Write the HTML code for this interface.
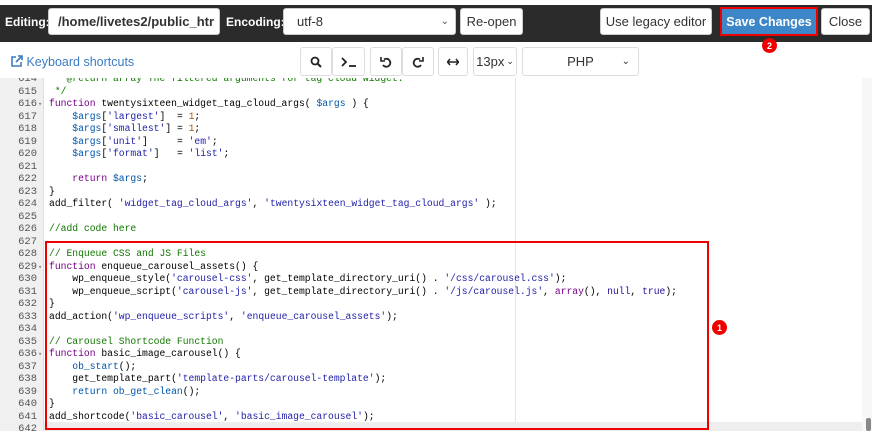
<!DOCTYPE html><html><head><style>
*{box-sizing:border-box;margin:0;padding:0}
body{width:872px;height:431px;overflow:hidden;background:#fff;font-family:"Liberation Sans",sans-serif;position:relative}
.a{position:absolute}
.hdr{left:0;top:5px;width:872px;height:37px;background:#2b2b2b}
.lbl{color:#fff;font-weight:bold;font-size:12px;top:15px}
.box{background:#fff;border:1px solid #ccc;border-radius:3px;font-size:13px;color:#333;display:flex;align-items:center}
.btn{justify-content:center}
.tb{background:#fff;border:1px solid #ddd;border-radius:3px;display:flex;align-items:center;justify-content:center;font-size:13px;color:#333;top:47px;height:29px}
.code{left:0;top:78px;width:862px;height:353px;overflow:hidden;background:#fff}
.gut{left:0;top:0;width:44px;height:353px;background:#f0f0f0;border-right:1px solid #ddd}
pre{font-family:"Liberation Mono",monospace;font-size:9.7px;line-height:12.5px;position:absolute;top:-5px}
.ln{left:0;width:37px;text-align:right;color:#555;font-size:10.5px}
.src{left:49px;color:#000}
.k{color:#708}.s{color:#22a}.v{color:#05a}.c{color:#a50}.cm{color:#170}.b{color:#219}.p{color:#05a}
.badge{width:15px;height:15px;border-radius:50%;background:#e00;color:#fff;font-size:9px;font-weight:bold;display:flex;align-items:center;justify-content:center}
</style></head><body>
<div class="a hdr"></div>
<div class="a lbl" style="left:5px">Editing:</div>
<div class="a box" style="left:48px;top:8px;width:172px;height:27px;padding-left:9px;font-weight:bold;font-size:13px;overflow:hidden;white-space:nowrap">/home/livetes2/public_htr</div>
<div class="a lbl" style="left:226px">Encoding:</div>
<div class="a box" style="left:283px;top:8px;width:173px;height:27px;padding-left:13px">utf-8<span style="position:absolute;right:6px;font-size:10px;color:#555">&#8964;</span></div>
<div class="a box btn" style="left:460px;top:8px;width:63px;height:27px">Re-open</div>
<div class="a box btn" style="left:600px;top:8px;width:112px;height:27px">Use legacy editor</div>
<div class="a" style="left:720px;top:7px;width:98px;height:29px;border:2px solid #e00;background:#3d87c8;color:#fff;font-weight:bold;font-size:12.5px;display:flex;align-items:center;justify-content:center">Save Changes</div>
<div class="a box btn" style="left:821px;top:8px;width:49px;height:27px">Close</div>
<div class="a badge" style="left:762px;top:38px">2</div>
<div class="a" style="left:11px;top:55px;font-size:12.5px;color:#3b7cc4"><svg width="12" height="12" viewBox="0 0 12 12" style="vertical-align:-1px"><path d="M5 2H1v9h9V7" fill="none" stroke="#3b7cc4" stroke-width="1.6"/><path d="M7 1h4v4M11 1L5 7" fill="none" stroke="#3b7cc4" stroke-width="1.6"/></svg> Keyboard shortcuts</div>
<div class="a tb" style="left:300px;width:32px"><svg width="12" height="12" viewBox="0 0 12 12"><circle cx="5" cy="5" r="3.5" fill="none" stroke="#222" stroke-width="1.8"/><path d="M7.5 7.5L11 11" stroke="#222" stroke-width="2"/></svg></div>
<div class="a tb" style="left:332px;width:33px"><svg width="16" height="12" viewBox="0 0 16 12"><path d="M1 2l4 4-4 4" fill="none" stroke="#222" stroke-width="1.8"/><path d="M8 10h7" stroke="#222" stroke-width="1.8"/></svg></div>
<div class="a tb" style="left:370px;width:32px"><svg width="12" height="12" viewBox="0 0 12 12"><path d="M4 3.5A4 4 0 1 1 3 9" fill="none" stroke="#222" stroke-width="1.8"/><path d="M1 1v4h4" fill="none" stroke="#222" stroke-width="1.6"/></svg></div>
<div class="a tb" style="left:402px;width:32px"><svg width="12" height="12" viewBox="0 0 12 12"><path d="M8 3.5A4 4 0 1 0 9 9" fill="none" stroke="#222" stroke-width="1.8"/><path d="M11 1v4H7" fill="none" stroke="#222" stroke-width="1.6"/></svg></div>
<div class="a tb" style="left:438px;width:30px"><svg width="12" height="8" viewBox="0 0 12 8"><path d="M1 4h10M3 1L0.5 4 3 7M9 1l2.5 3L9 7" fill="none" stroke="#222" stroke-width="1.5"/></svg></div>
<div class="a tb" style="left:473px;width:44px">13px <span style="font-size:9px;margin-left:2px">&#8964;</span></div>
<div class="a tb" style="left:522px;width:117px">PHP<span style="position:absolute;right:8px;font-size:10px">&#8964;</span></div>
<div class="a code">
<div class="a gut"></div>
<div class="a" style="left:515px;top:0;width:1px;height:353px;background:#e4e4e4"></div>
<pre class="a ln">614
615
616
617
618
619
620
621
622
623
624
625
626
627
628
629
630
631
632
633
634
635
636
637
638
639
640
641
642</pre>
<pre class="a" style="left:38px;color:#888;font-size:7px;line-height:12.5px;top:-4px">


▾












▾






▾</pre>
<pre class="a src"><span class="cm">   @return array The filtered arguments for tag cloud widget.</span>
<span class="cm"> */</span>
<span class="k">function</span> twentysixteen_widget_tag_cloud_args( <span class="v">$args</span> ) {
    <span class="v">$args</span>[<span class="s">'largest'</span>]  = <span class="c">1</span>;
    <span class="v">$args</span>[<span class="s">'smallest'</span>] = <span class="c">1</span>;
    <span class="v">$args</span>[<span class="s">'unit'</span>]     = <span class="s">'em'</span>;
    <span class="v">$args</span>[<span class="s">'format'</span>]   = <span class="s">'list'</span>;

    <span class="k">return</span> <span class="v">$args</span>;
}
add_filter( <span class="s">'widget_tag_cloud_args'</span>, <span class="s">'twentysixteen_widget_tag_cloud_args'</span> );

<span class="cm">//add code here</span>

<span class="cm">// Enqueue CSS and JS Files</span>
<span class="k">function</span> enqueue_carousel_assets() {
    wp_enqueue_style(<span class="s">'carousel-css'</span>, get_template_directory_uri() . <span class="s">'/css/carousel.css'</span>);
    wp_enqueue_script(<span class="s">'carousel-js'</span>, get_template_directory_uri() . <span class="s">'/js/carousel.js'</span>, <span class="k">array</span>(), <span class="b">null</span>, <span class="b">true</span>);
}
add_action(<span class="s">'wp_enqueue_scripts'</span>, <span class="s">'enqueue_carousel_assets'</span>);

<span class="cm">// Carousel Shortcode Function</span>
<span class="k">function</span> basic_image_carousel() {
    <span class="p">ob_start</span>();
    get_template_part(<span class="s">'template-parts/carousel-template'</span>);
    <span class="k" style="color:#05a">return</span> <span class="p">ob_get_clean</span>();
}
add_shortcode(<span class="s">'basic_carousel'</span>, <span class="s">'basic_image_carousel'</span>);
</pre>
<div class="a" style="left:44px;top:344px;width:818px;height:9px;background:#eee"></div>
</div>
<div class="a" style="left:862px;top:78px;width:10px;height:353px;background:#f7f7f7"></div>
<div class="a" style="left:866px;top:418px;width:5px;height:13px;background:#888;border-radius:2px"></div>
<div class="a" style="left:45px;top:241px;width:664px;height:189px;border:2px solid #e00"></div>
<div class="a badge" style="left:712px;top:320px">1</div>
</body></html>
